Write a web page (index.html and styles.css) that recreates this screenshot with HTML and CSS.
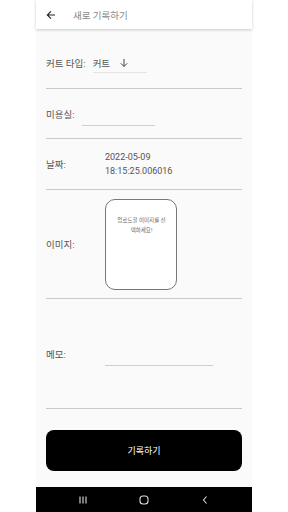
FILE: index.html
```html
<!DOCTYPE html>
<html lang="ko">
<head>
<meta charset="utf-8">
<link rel="stylesheet" href="styles.css">
</head>
<body>
<div class="phone">
  <header class="appbar">
    <svg class="back" width="10" height="10" viewBox="0 0 10 10"><path d="M9 5H1.5M5 1.3L1.3 5L5 8.7" fill="none" stroke="#222" stroke-width="1.1"/></svg>
    <span class="title">새로 기록하기</span>
  </header>
  <main class="content">
    <div class="row r1">
      <span class="label">커트 타입:</span>
      <div class="dropdown">
        <span>커트</span>
        <svg width="10" height="10" viewBox="0 0 10 10"><path d="M5 1V8.5M1.8 5.3L5 8.5L8.2 5.3" fill="none" stroke="#444" stroke-width="1"/></svg>
      </div>
    </div>
    <div class="row r2">
      <span class="label">미용실:</span>
      <div class="field short"></div>
    </div>
    <div class="row r3">
      <span class="label fixed">날짜:</span>
      <div class="date">2022-05-09<br>18:15:25.006016</div>
    </div>
    <div class="row r4">
      <span class="label fixed">이미지:</span>
      <div class="imgbox"><p>업로드할 이미지를 선택하세요!</p></div>
    </div>
    <div class="row r5">
      <span class="label fixed">메모:</span>
      <div class="field memo"></div>
    </div>
    <button class="submit">기록하기</button>
  </main>
  <nav class="navbar">
    <svg width="8" height="8" viewBox="0 0 8 8"><path d="M1 0.5V7.5M4 0.5V7.5M7 0.5V7.5" stroke="#ddd" stroke-width="1.1"/></svg>
    <svg width="10" height="10" viewBox="0 0 10 10"><rect x="1" y="1" width="8" height="8" rx="3" fill="none" stroke="#ddd" stroke-width="1.1"/></svg>
    <svg width="8" height="10" viewBox="0 0 8 10"><path d="M5.5 1.5L2.5 5L5.5 8.5" fill="none" stroke="#ddd" stroke-width="1.1"/></svg>
  </nav>
</div>
</body>
</html>
```
FILE: styles.css
```css
* { box-sizing: border-box; }
html, body { margin: 0; padding: 0; background: #fff; }
body {
  font-family: Roboto, "Noto Sans CJK KR", sans-serif;
  color: #444;
}
.phone {
  width: 216px;
  height: 512px;
  margin: 0 auto;
  background: #fafafa;
  display: flex;
  flex-direction: column;
}
.appbar {
  height: 29px;
  flex: none;
  background: #fff;
  display: flex;
  align-items: center;
  padding-left: 10px;
  box-shadow: 0 1px 3px rgba(0,0,0,0.2);
  position: relative;
  z-index: 1;
}
.back { margin-right: 17px; }
.title { font-size: 9.5px; color: #888; }
.content {
  flex: 1;
  padding: 9px 10px 0;
  display: flex;
  flex-direction: column;
}
.row {
  display: flex;
  align-items: center;
  border-bottom: 1px solid #c9c9c9;
}
.r1 { height: 51px; }
.r2 { height: 50px; }
.r3 { height: 51px; }
.r4 { height: 109px; }
.r5 { height: 110px; }
.label { font-size: 9.5px; color: #555; white-space: nowrap; }
.label.fixed { width: 59px; flex: none; }
.dropdown {
  margin-left: 7px;
  width: 54px;
  height: 18px;
  display: flex;
  align-items: center;
  gap: 9px;
  font-size: 9.5px;
  color: #555;
  border-bottom: 1px solid #e4e4e4;
  margin-top: 1px;
}
.field {
  height: 24px;
  border-bottom: 1px solid #cfcfcf;
}
.field.short { width: 73px; margin-left: 7px; margin-top: 1px; }
.field.memo { width: 108px; margin-top: 1px; }
.date {
  font-size: 9px;
  line-height: 14px;
  color: #555;
}
.imgbox {
  width: 72px;
  height: 91px;
  border: 1px solid #777;
  border-radius: 10px;
  background: #fff;
  padding: 15px 9px 0 10px;
}
.imgbox p {
  margin: 0;
  font-size: 5.5px;
  line-height: 10px;
  text-align: center;
  color: #666;
}
.submit {
  margin-top: 21px;
  height: 41px;
  border: none;
  border-radius: 8px;
  background: #000;
  color: #fff;
  font-family: inherit;
  font-size: 9px;
}
.navbar {
  height: 25px;
  flex: none;
  margin-top: auto;
  background: #000;
  display: flex;
  align-items: center;
  justify-content: center;
  gap: 52px;
}
```
